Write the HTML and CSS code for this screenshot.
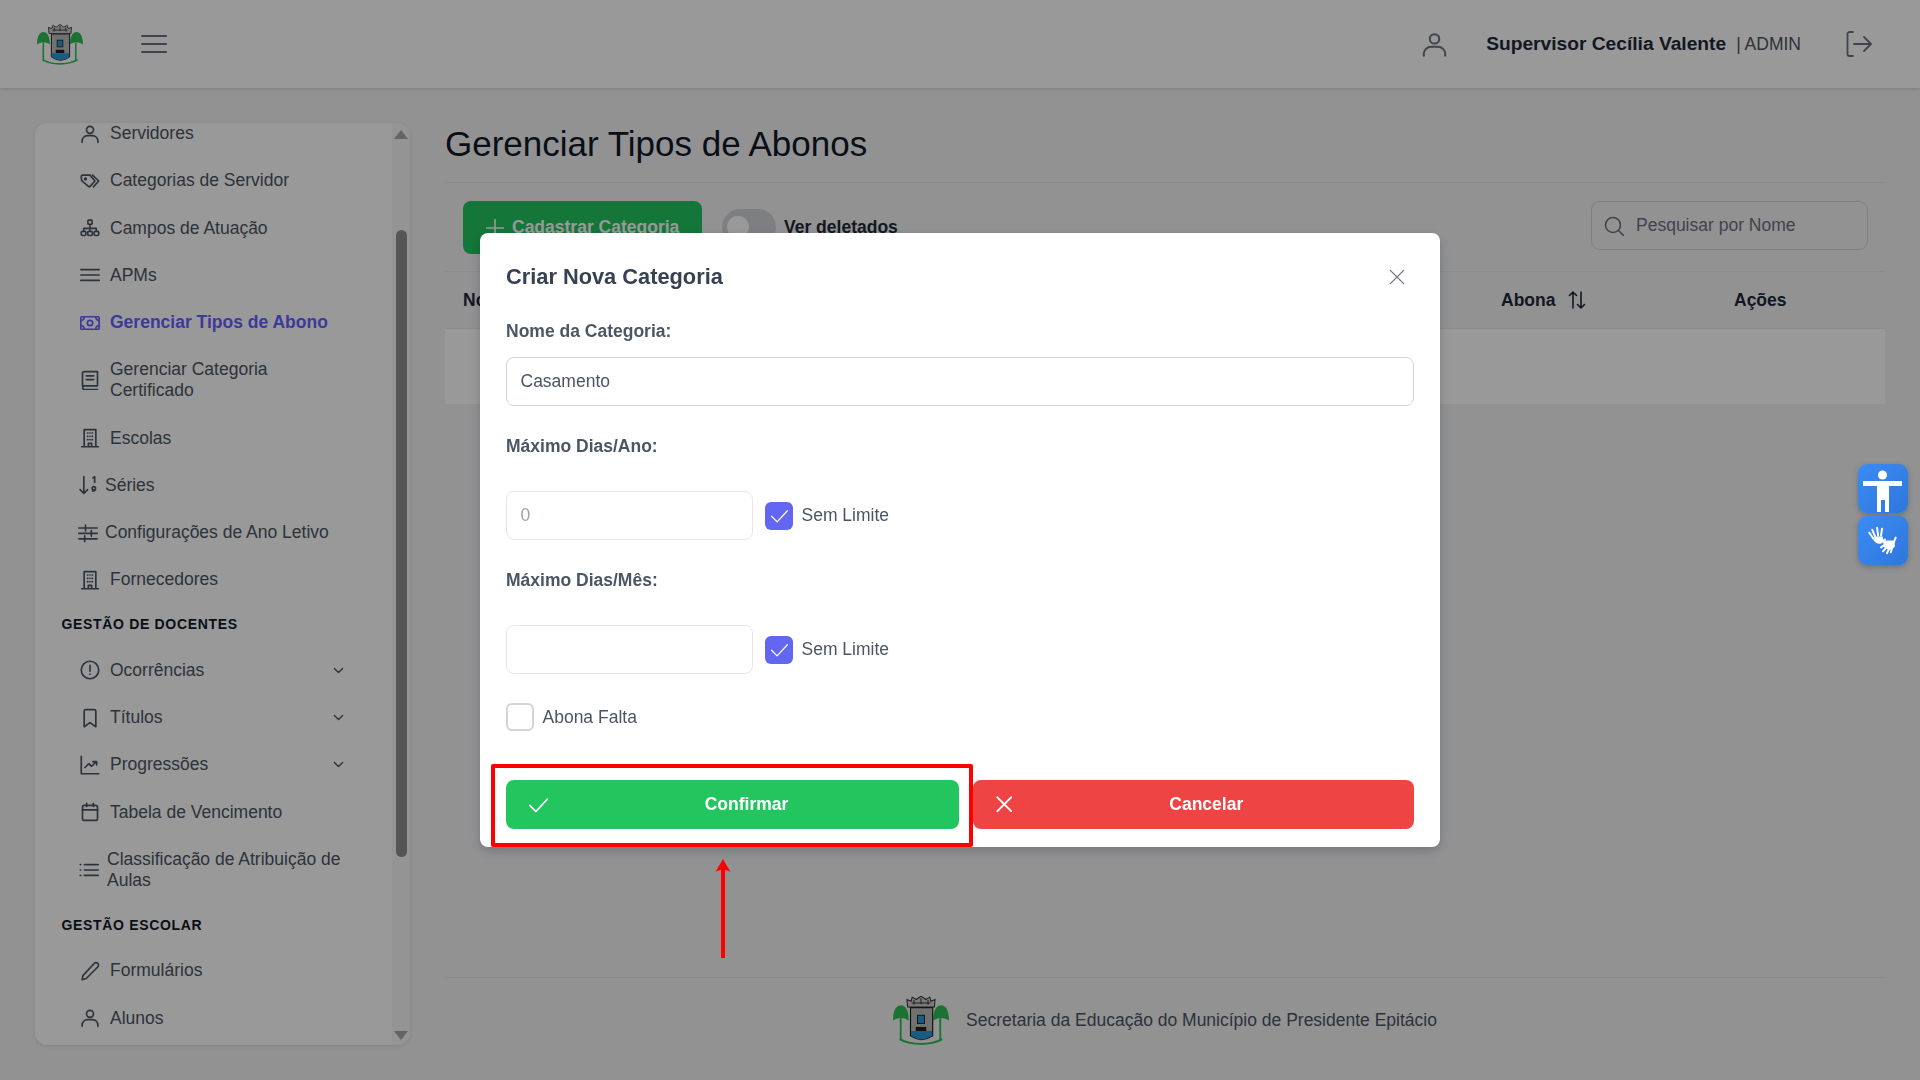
FILE: index.html
```html
<!DOCTYPE html>
<html lang="pt-BR">
<head>
<meta charset="utf-8">
<title>Gerenciar Tipos de Abonos</title>
<link rel="stylesheet" href="styles.css">
</head>
<body>
<svg class="sprite" xmlns="http://www.w3.org/2000/svg">
  <symbol id="i-user" viewBox="0 0 24 24"><circle cx="12" cy="7" r="4.200"/><path d="M2.500 22v-1.500a6.500 6.500 0 0 1 6.500-6.500h6a6.500 6.500 0 0 1 6.500 6.500V22"/></symbol>
  <symbol id="i-tag" viewBox="0 0 24 24"><path d="M1.500 6.500a1.500 1.500 0 0 1 1.500-1.500h9l6 7-6 6.500a1.300 1.300 0 0 1-1.900 0L2 11.500z"/><path d="M15 5l7.500 7-6.500 7"/><circle cx="6.500" cy="9.500" r="1"/></symbol>
  <symbol id="i-tree" viewBox="0 0 24 24"><rect x="9.500" y="2.500" width="5" height="5" rx=".8"/><path d="M12 7.500v8M4.500 16v-3.500h15V16"/><rect x="1.500" y="16" width="5.500" height="5" rx="1.500"/><rect x="9.300" y="16" width="5.500" height="5" rx="1.500"/><rect x="17" y="16" width="5.500" height="5" rx="1.500"/></symbol>
  <symbol id="i-bars" viewBox="0 0 24 24"><path d="M1 5.500h22M1 12h22M1 18.500h22"/></symbol>
  <symbol id="i-cash" viewBox="0 0 24 24"><rect x="1" y="4.500" width="22" height="15" rx="1"/><circle cx="12" cy="12" r="3.200"/><path d="M1 9a4 4 0 0 0 4-4.500M19 4.500A4 4 0 0 0 23 9M1 15a4 4 0 0 1 4 4.500M19 19.500a4 4 0 0 1 4-4.500"/></symbol>
  <symbol id="i-book" viewBox="0 0 24 24"><path d="M3 19V4a2 2 0 0 1 2-2h16v17H5a2.300 2.300 0 0 0 0 4.500h16"/><path d="M7.500 7h9M7.500 11.500h9"/></symbol>
  <symbol id="i-build" viewBox="0 0 24 24"><path d="M2 22.500h20M5 22.500V2h14v20.500M10 22.500v-4h4v4"/><path d="M9 6h.5M14.500 6h.5M9 10h.5M14.500 10h.5M9 14h.5M14.500 14h.5M12 6h.1M12 10h.1M12 14h.1"/></symbol>
  <symbol id="i-sort" viewBox="0 0 24 24"><path d="M7 2v20M2.500 17.500 7 22l4.500-4.500"/><path d="M18 3.500 20 2v7M17.500 19.500c2.500 0 3.500-1.500 3.500-3.500a2 2 0 1 0-2 2h2"/></symbol>
  <symbol id="i-sliders" viewBox="0 0 24 24"><path d="M1 6h22M1 12.500h22M1 19h22M9 2.500v7M16 9v7M8 15.500v7"/></symbol>
  <symbol id="i-alert" viewBox="0 0 24 24"><circle cx="12" cy="12" r="10.500"/><path d="M12 6.500v7M12 17v.2"/></symbol>
  <symbol id="i-mark" viewBox="0 0 24 24"><path d="M5 22.500V4a2 2 0 0 1 2-2h10a2 2 0 0 1 2 2v18.500l-7-5z"/></symbol>
  <symbol id="i-chart" viewBox="0 0 24 24"><path d="M1.500 1.500v21h21M6 15l4.500-4.500 3.500 3 5.500-5.500M15.500 8H20v4"/></symbol>
  <symbol id="i-cal" viewBox="0 0 24 24"><rect x="3" y="4" width="18" height="18" rx="2"/><path d="M3 9.500h18M8 1.500v4M16 1.500v4"/></symbol>
  <symbol id="i-list" viewBox="0 0 24 24"><path d="M6.500 5.500H23M6.500 12H23M6.500 18.500H23M1.500 5.500h.5M1.500 12h.5M1.500 18.500h.5"/></symbol>
  <symbol id="i-pen" viewBox="0 0 24 24"><path d="M17 3a3 3 0 0 1 4.300 4.200L7.500 21 2.500 22.500 3.500 17.500z"/></symbol>
  <symbol id="i-chev" viewBox="0 0 24 24"><path d="M3 7.500l9 9 9-9"/></symbol>
  <symbol id="i-x" viewBox="0 0 24 24"><path d="M2 2l20 20M22 2 2 22"/></symbol>
  <symbol id="i-check" viewBox="0 0 24 24"><path d="M2 13 9 20 22 6"/></symbol>
  <symbol id="logo" viewBox="0 0 48 42">
    <path d="M6.600 19v18M40.500 19v18" class="l-trunk"/>
    <path d="M0 21C0 12 3 8 6.800 8s6.700 4 6.700 13c-2-1.500-4-2-6.700-2S2 19.500 0 21z" class="l-green"/>
    <path d="M48 21c0-9-3-13-6.800-13s-6.700 4-6.700 13c2-1.500 4-2 6.700-2s4.800.5 6.800 2z" class="l-green"/>
    <path d="M15 10h19v24c-3 2-6 3-9.500 3.500C21 37 18 36 15 34z" class="l-shield"/>
    <path d="M12.500 9.500 12 3l3.500 1.500L16.500 1l3.500 2 4-3 4 3 3.500-2 1 3.500L36 3l-.5 6.500z" class="l-crown"/>
    <path d="M16 6h16M18 3.500v4M24 2v5M30 3.500v4" class="l-detail"/>
    <rect x="21" y="16.500" width="6" height="7" class="l-blue l-edge"/>
    <path d="M19.500 26.500h9V30h-9z" class="l-dark"/>
    <path d="M15.500 30h18v4c-3 2-6 3-9 3.300-3-.3-6-1.300-9-3.300z" class="l-blue"/>
    <path d="M6 36c5 3 11 4.300 18 4.300s13-1.300 18-4.300l.5 2c-5 2.500-11 4-18.500 4s-13.500-1.500-18.500-4z" class="l-green"/>
  </symbol>
</svg>

<header class="topbar">
  <svg class="logo-top"><use href="#logo"/></svg>
  <button class="burger" aria-label="Menu"><span></span><span></span><span></span></button>
  <div class="user-area">
    <svg class="user-ico"><use href="#i-user"/></svg>
    <strong class="user-name">Supervisor Cecília Valente</strong>
    <span class="user-role">| ADMIN</span>
    <svg class="logout" viewBox="0 0 26 26"><path d="M7 1H3.500A2 2 0 0 0 1.500 3v20a2 2 0 0 0 2 2H7M8 13h17M18 6l7 7-7 7"/></svg>
  </div>
</header>

<div class="layout">
  <aside class="sidebar">
    <nav class="menu">
      <ul class="menu-list">
        <li class="item"><svg class="ico"><use href="#i-user"/></svg>Servidores</li>
        <li class="item"><svg class="ico"><use href="#i-tag"/></svg>Categorias de Servidor</li>
        <li class="item"><svg class="ico"><use href="#i-tree"/></svg>Campos de Atuação</li>
        <li class="item"><svg class="ico"><use href="#i-bars"/></svg>APMs</li>
        <li class="item active"><svg class="ico"><use href="#i-cash"/></svg>Gerenciar Tipos de Abono</li>
        <li class="item"><svg class="ico"><use href="#i-book"/></svg><span>Gerenciar Categoria<br>Certificado</span></li>
        <li class="item"><svg class="ico"><use href="#i-build"/></svg>Escolas</li>
        <li class="item tight"><svg class="ico"><use href="#i-sort"/></svg>Séries</li>
        <li class="item tight"><svg class="ico"><use href="#i-sliders"/></svg>Configurações de Ano Letivo</li>
        <li class="item"><svg class="ico"><use href="#i-build"/></svg>Fornecedores</li>
        <li class="section">GESTÃO DE DOCENTES</li>
        <li class="item"><svg class="ico"><use href="#i-alert"/></svg>Ocorrências<svg class="chev"><use href="#i-chev"/></svg></li>
        <li class="item"><svg class="ico"><use href="#i-mark"/></svg>Títulos<svg class="chev"><use href="#i-chev"/></svg></li>
        <li class="item"><svg class="ico"><use href="#i-chart"/></svg>Progressões<svg class="chev"><use href="#i-chev"/></svg></li>
        <li class="item"><svg class="ico"><use href="#i-cal"/></svg>Tabela de Vencimento</li>
        <li class="item mid"><svg class="ico"><use href="#i-list"/></svg><span>Classificação de Atribuição de<br>Aulas</span></li>
        <li class="section">GESTÃO ESCOLAR</li>
        <li class="item"><svg class="ico"><use href="#i-pen"/></svg>Formulários</li>
        <li class="item"><svg class="ico"><use href="#i-user"/></svg>Alunos</li>
      </ul>
    </nav>
    <div class="scrollbar">
      <span class="arrow-up"></span>
      <span class="thumb"></span>
      <span class="arrow-down"></span>
    </div>
  </aside>

  <main class="content">
    <h1 class="page-title">Gerenciar Tipos de Abonos</h1>
    <div class="toolbar">
      <button class="add-btn"><svg class="plus" viewBox="0 0 18 18"><path d="M9 0v18M0 9h18"/></svg>Cadastrar Categoria</button>
      <span class="toggle"><span class="knob"></span></span>
      <strong class="toggle-label">Ver deletados</strong>
      <label class="search">
        <svg class="search-ico" viewBox="0 0 20 20"><circle cx="9" cy="9" r="7.500"/><path d="m14.500 14.500 5 5"/></svg>
        <input class="search-input" placeholder="Pesquisar por Nome">
      </label>
    </div>
    <div class="table-head">
      <span>Nome</span>
      <span class="sortable">Abona<svg class="sort-ico" viewBox="0 0 18 18"><path d="M5 17V1M1.500 4.500 5 1l3.500 3.500M13 1v16M9.500 13.500 13 17l3.500-3.500"/></svg></span>
      <span>Ações</span>
    </div>
    <div class="table-row"></div>
    <footer class="footer">
      <svg class="logo-foot"><use href="#logo"/></svg>
      <span>Secretaria da Educação do Município de Presidente Epitácio</span>
    </footer>
  </main>
</div>

<div class="overlay">
  <section class="modal">
    <div class="modal-head">
      <h2 class="modal-title">Criar Nova Categoria</h2>
      <svg class="close"><use href="#i-x"/></svg>
    </div>
    <label class="label first">Nome da Categoria:</label>
    <input class="field field-full" value="Casamento">
    <label class="label">Máximo Dias/Ano:</label>
    <div class="limit-row">
      <input class="field field-small" placeholder="0">
      <span class="box checked"><svg><use href="#i-check"/></svg></span>
      <span class="box-label">Sem Limite</span>
    </div>
    <label class="label">Máximo Dias/Mês:</label>
    <div class="limit-row">
      <input class="field field-small">
      <span class="box checked"><svg><use href="#i-check"/></svg></span>
      <span class="box-label">Sem Limite</span>
    </div>
    <div class="abona-row">
      <span class="box"></span>
      <span class="box-label">Abona Falta</span>
    </div>
    <div class="actions">
      <button class="btn btn-ok"><svg class="btn-ico ok-ico"><use href="#i-check"/></svg><span class="btn-text">Confirmar</span></button>
      <button class="btn btn-cancel"><svg class="btn-ico no-ico"><use href="#i-x"/></svg><span class="btn-text">Cancelar</span></button>
    </div>
  </section>
</div>

<div class="a11y">
  <button class="a11y-btn" aria-label="Acessibilidade">
    <svg viewBox="0 0 50 49"><circle cx="24.500" cy="11" r="4.500"/><path d="M5 17h39v5H31v26h-4V36h-4v12h-4V22H5z"/></svg>
  </button>
  <button class="a11y-btn" aria-label="Libras">
    <svg viewBox="0 0 50 50"><g class="hand"><path d="M15 23 11 17M17 21 14 14M20 20 19 12M23 20 24 13M16 24c2 3 4 4 7 3l4-3"/><path d="M17 22h7v4h-5z"/><path d="M30 27 23 32M31 29 25 36M33 30 29 38M35 30 33 37M36 27l2-5"/><path d="M26 26h10v5l-5 3-4-3z"/></g></svg>
  </button>
</div>

<div class="callout"></div>
<svg class="callout-arrow" viewBox="0 0 16 100"><path d="M8 100V8" class="shaft"/><path d="M8 0 15.500 13 8 10 .5 13z" class="head"/></svg>
</body>
</html>
```
FILE: styles.css
```css
* { box-sizing: border-box; }
html, body { margin: 0; height: 100%; }
body {
  display: flex;
  flex-direction: column;
  height: 100vh;
  overflow: hidden;
  background: #f3f4f6;
  color: #374151;
  font-family: "Liberation Sans", Arial, sans-serif;
  font-size: 17.5px;
}
button, input { font-family: inherit; font-size: inherit; }
.sprite { display: none; }
.ico, .user-ico, .chev, .close, .btn-ico, .box svg, .logout, .search-ico, .sort-ico, .plus {
  fill: none;
  stroke: currentColor;
  stroke-linecap: round;
  stroke-linejoin: round;
}

/* logo parts */
.l-green { fill: #2ebf55; }
.l-trunk { fill: none; stroke: #2ebf55; stroke-width: 1.6; }
.l-shield { fill: #bdbdbd; stroke: #1d1d1d; stroke-width: 1; }
.l-crown { fill: #cfcfcf; stroke: #333; stroke-width: .9; }
.l-detail { fill: none; stroke: #333; stroke-width: .9; }
.l-blue { fill: #2a98d8; }
.l-edge { stroke: #1d1d1d; stroke-width: .8; }
.l-dark { fill: #222; }

/* top bar */
.topbar {
  flex: none;
  height: 88px;
  display: flex;
  align-items: center;
  padding-left: 37px;
  background: #fff;
  box-shadow: 0 1px 3px rgba(0,0,0,.15);
}
.logo-top { width: 46px; height: 41px; }
.burger {
  display: flex;
  flex-direction: column;
  gap: 5.5px;
  width: 26px;
  margin-left: 58px;
  padding: 0;
  border: 0;
  background: none;
}
.burger span { display: block; height: 2.5px; background: #6b7280; border-radius: 1px; }
.user-area { display: flex; align-items: center; margin-left: auto; padding-right: 48px; }
.user-ico { width: 27px; height: 27px; margin-right: 38px; stroke-width: 1.8; color: #6b7280; }
.user-name { color: #1f2937; font-size: 19.2px; white-space: nowrap; }
.user-role { margin-left: 10px; color: #4b5563; font-size: 17.5px; white-space: nowrap; }
.logout { width: 26px; height: 26px; margin-left: 45px; stroke-width: 1.8; color: #6b7280; }

/* frame */
.layout { flex: 1; min-height: 0; display: flex; gap: 35px; padding: 35px; }

/* sidebar */
.sidebar {
  flex: none;
  width: 375px;
  display: flex;
  background: #fff;
  border-radius: 12px;
  overflow: hidden;
  box-shadow: 0 1px 4px rgba(0,0,0,.12);
}
.menu { flex: 1; min-width: 0; overflow: hidden; }
.menu-list { list-style: none; margin: -13.100px 0 0; padding: 0; }
.item {
  display: flex;
  align-items: center;
  gap: 10px;
  padding: 13.135px 48px 13.135px 45px;
  line-height: 21px;
  color: #4b5563;
  white-space: nowrap;
}
.item.tight { gap: 7px; padding-left: 43px; }
.item.mid { gap: 8px; padding-left: 44px; }
.item.active { color: #6a60ff; font-weight: 700; }
.ico { flex: none; width: 20px; height: 20px; stroke-width: 2; }
.chev { width: 11px; height: 11px; margin-left: auto; stroke-width: 3; }
.section {
  height: 43.3px;
  line-height: 43.3px;
  padding-left: 26.5px;
  color: #111827;
  font-size: 14px;
  font-weight: 700;
  letter-spacing: .67px;
}
.scrollbar {
  flex: none;
  width: 18px;
  display: flex;
  flex-direction: column;
  align-items: center;
  padding: 7px 0 5px;
  background: #f7f7f7;
}
.arrow-up, .arrow-down { width: 0; height: 0; border-left: 7px solid transparent; border-right: 7px solid transparent; }
.arrow-up { border-bottom: 9px solid #a8a8a8; }
.arrow-down { margin-top: auto; border-top: 9px solid #a8a8a8; }
.thumb { width: 11px; height: 627px; margin-top: 91px; background: #8e8e8e; border-radius: 6px; }

/* content */
.content { flex: 1; min-width: 0; display: flex; flex-direction: column; }
.page-title {
  margin: 0;
  padding-bottom: 17px;
  border-bottom: 1px solid #e5e7eb;
  font-size: 35px;
  line-height: 42px;
  font-weight: 400;
  color: #111827;
}
.toolbar {
  height: 89px;
  display: flex;
  align-items: flex-start;
  padding: 18px 17px 0 18px;
  border-bottom: 1px solid #e5e7eb;
}
.add-btn {
  width: 239px;
  height: 53px;
  display: flex;
  align-items: center;
  gap: 8px;
  padding: 0 0 0 23px;
  border: 0;
  border-radius: 8px;
  background: #22c55e;
  color: #fff;
  font-weight: 700;
  white-space: nowrap;
}
.plus { width: 18px; height: 18px; stroke-width: 1.6; flex: none; }
.toggle {
  width: 54px;
  height: 36px;
  margin: 8px 0 0 20px;
  padding: 7px 0 0 5px;
  border-radius: 18px;
  background: #d1d5db;
}
.knob { display: block; width: 22px; height: 22px; border-radius: 50%; background: #fff; }
.toggle-label { margin: 15px 0 0 8px; line-height: 22px; color: #1f2937; white-space: nowrap; }
.search {
  width: 277px;
  height: 49px;
  margin-left: auto;
  display: flex;
  align-items: center;
  gap: 12px;
  padding-left: 12px;
  border: 1px solid #d1d5db;
  border-radius: 9px;
}
.search-ico { width: 20px; height: 20px; flex: none; stroke-width: 1.6; color: #6b7280; }
.search-input { flex: 1; min-width: 0; border: 0; outline: 0; padding: 0; background: none; }
.search-input::placeholder { color: #6b7280; opacity: 1; }
.table-head {
  height: 57px;
  display: grid;
  grid-template-columns: 1038px 233px 1fr;
  align-items: center;
  padding-left: 18px;
  border-bottom: 1px solid #e5e7eb;
  color: #1f2937;
  font-weight: 700;
}
.sortable { display: flex; align-items: center; gap: 13px; }
.sort-ico { width: 18px; height: 18px; stroke-width: 1.6; }
.table-row { height: 76px; background: #fff; border-bottom: 1px solid #f3f4f6; }
.footer {
  margin-top: auto;
  display: flex;
  justify-content: center;
  align-items: center;
  gap: 17px;
  padding-top: 18px;
  border-top: 1px solid #e5e7eb;
  color: #4b5563;
  white-space: nowrap;
}
.logo-foot { width: 56px; height: 49px; }

/* modal */
.overlay {
  position: fixed;
  inset: 0;
  display: flex;
  align-items: center;
  justify-content: center;
  background: rgba(0,0,0,.4);
}
.modal {
  width: 960px;
  height: 614px;
  padding: 26px 26px 18px 26px;
  background: #fff;
  border-radius: 8px;
  box-shadow: 0 4px 12px rgba(0,0,0,.2);
}
.modal-head { height: 35px; display: flex; align-items: center; justify-content: space-between; padding-right: 9px; }
.modal-title { margin: 0; color: #374151; font-size: 21.8px; font-weight: 700; }
.close { width: 16px; height: 16px; color: #6b7280; stroke-width: 1.9; }
.label { display: block; margin-top: 29px; color: #4b5563; font-weight: 700; line-height: 22px; }
.label.first { margin-top: 26px; }
.field {
  height: 49px;
  padding: 0 13.5px;
  border: 1px solid #e5e7eb;
  border-radius: 8px;
  outline: 0;
  color: #4b5563;
  background: #fff;
}
.field::placeholder { color: #9ca3af; opacity: 1; }
.field-full { display: block; width: 100%; margin-top: 15px; border-color: #d1d5db; }
.field-small { width: 247px; }
.limit-row { display: flex; align-items: center; margin-top: 34px; }
.box {
  flex: none;
  width: 28px;
  height: 28px;
  border: 2px solid #d1d5db;
  border-radius: 6px;
  background: #fff;
}
.limit-row .box { margin-left: 12px; }
.box.checked { display: flex; align-items: center; justify-content: center; border: 0; background: #6366f1; color: #fff; }
.box svg { width: 19px; height: 19px; stroke-width: 1.6; }
.box-label { margin-left: 8.5px; color: #4b5563; white-space: nowrap; }
.abona-row { display: flex; align-items: center; margin-top: 29px; }
.actions { display: flex; gap: 14px; margin-top: 49px; }
.btn {
  height: 49px;
  display: flex;
  align-items: center;
  padding: 0 14px 0 22px;
  border: 0;
  border-radius: 8px;
  color: #fff;
  font-weight: 700;
}
.btn-ok { flex: 0 0 453px; padding-right: 15px; background: #22c55e; }
.btn-cancel { flex: 0 0 441px; padding-left: 22.5px; padding-right: 13.5px; background: #ef4444; }
.btn-text { flex: 1; text-align: center; }
.btn-ico { flex: none; color: #fff; }
.ok-ico { width: 21px; height: 21px; stroke-width: 2; }
.no-ico { width: 16.5px; height: 16.5px; stroke-width: 2.9; }

/* accessibility widgets */
.a11y { position: fixed; top: 464px; left: 1858px; display: flex; flex-direction: column; gap: 3px; }
.a11y-btn {
  width: 50px;
  height: 49px;
  padding: 0;
  border: 0;
  border-radius: 9px;
  background: linear-gradient(135deg, #3b8cf3, #2f76dc);
  box-shadow: 0 2px 6px rgba(0,0,0,.25);
}
.a11y-btn svg { display: block; width: 100%; height: 100%; fill: #fff; }
.hand { fill: #fff; stroke: #fff; stroke-width: 2; stroke-linecap: round; stroke-linejoin: round; }

/* annotation */
.callout {
  position: fixed;
  left: 491px;
  top: 764px;
  width: 482px;
  height: 83px;
  border: 4px solid #f00;
  border-radius: 2px;
}
.callout-arrow { position: fixed; left: 715px; top: 859px; width: 16px; height: 99px; }
.shaft { fill: none; stroke: #f00; stroke-width: 4; }
.head { fill: #f00; }
```
